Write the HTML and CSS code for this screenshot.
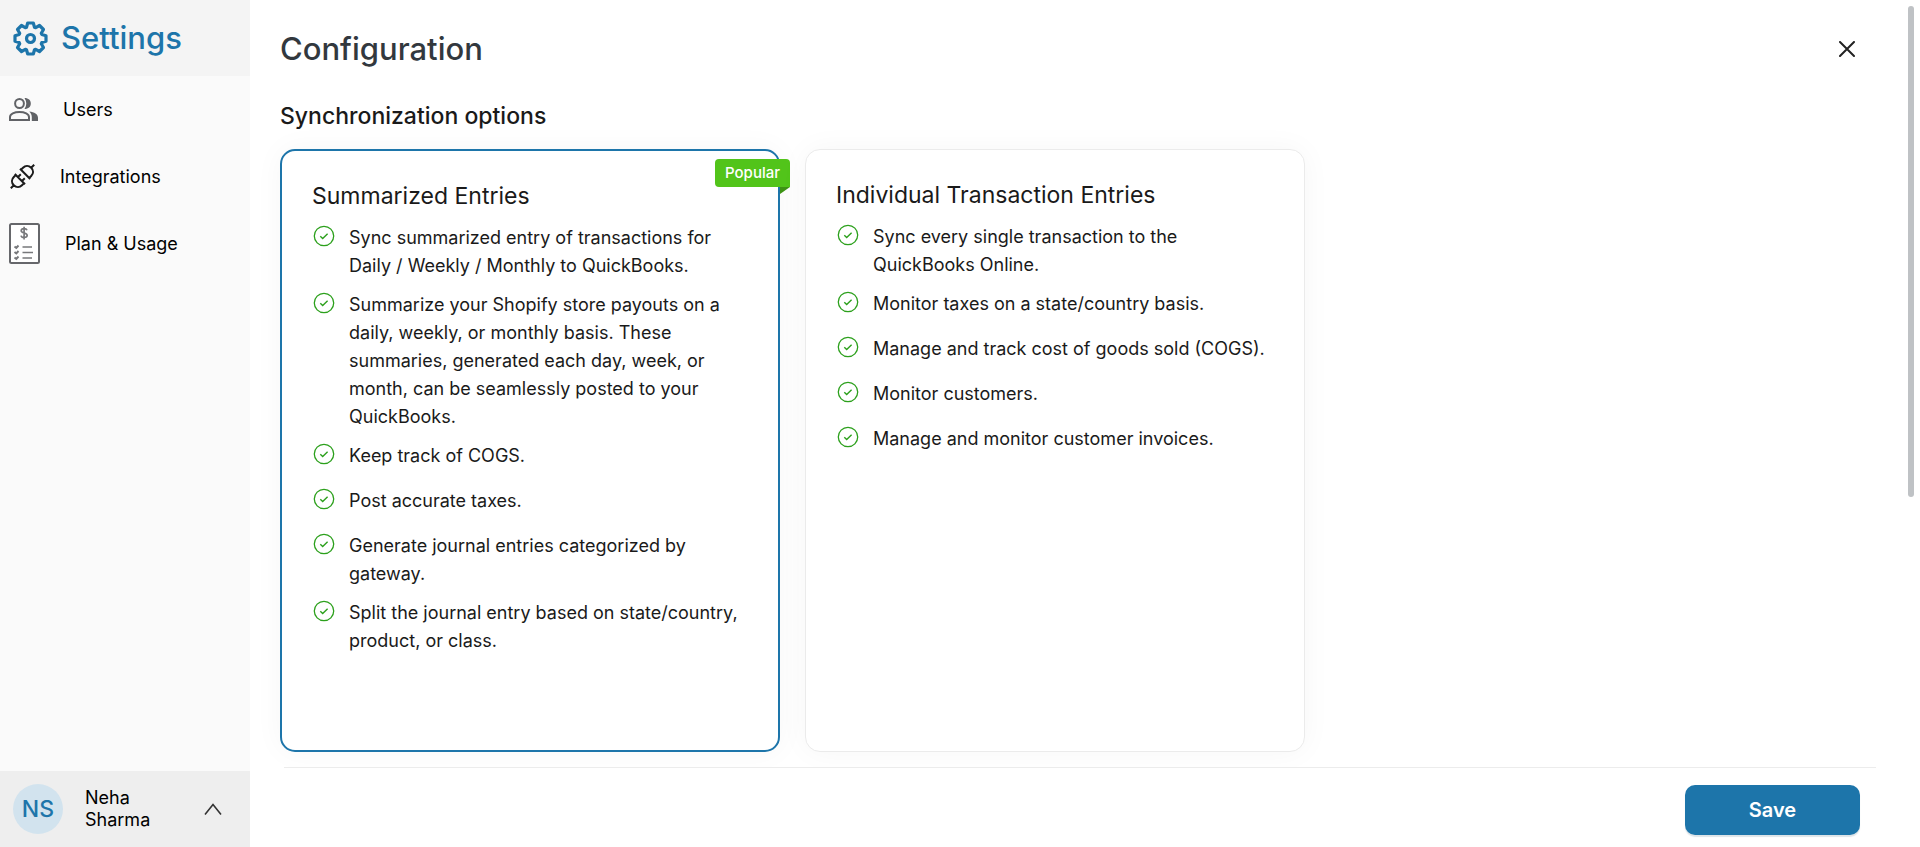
FILE: index.html
```html
<!DOCTYPE html>
<html lang="en">
<head>
<meta charset="utf-8">
<title>Settings - Configuration</title>
<meta name="viewport" content="width=device-width, initial-scale=1">
<link rel="stylesheet" href="styles.css">
</head>
<body>
<svg class="sprite" aria-hidden="true">
  <symbol id="check" viewBox="0 0 22 22">
    <circle cx="11" cy="11" r="9.700" fill="none" stroke="currentColor" stroke-width="1.300"/>
    <path d="M7.300 11.200l2.400 2.300 4.900-4.700" fill="none" stroke="currentColor" stroke-width="1.400"/>
  </symbol>
</svg>
<div class="app">
  <aside class="sidebar">
    <header class="brand">
      <svg class="brand-icon" viewBox="-17.500 -17.500 35 35" fill="none" stroke="currentColor" stroke-width="3.200" stroke-linejoin="round" aria-hidden="true">
        <path d="M-2.800-15.500H2.800L4-11.300 5.200-10.800 9-13 13-9 10.800-5.200 11.300-4 15.500-2.800V2.800L11.300 4 10.800 5.200 13 9 9 13 5.200 10.800 4 11.300 2.800 15.500H-2.800L-4 11.300-5.200 10.800-9 13-13 9-10.800 5.200-11.300 4-15.500 2.800V-2.800L-11.300-4-10.800-5.200-13-9-9-13-5.200-10.800-4-11.300z"/>
        <circle r="4"/>
      </svg>
      <h1 class="brand-title">Settings</h1>
    </header>
    <nav class="nav">
      <a class="nav-link" href="#users">
        <svg class="icon-users" viewBox="0 0 29 23" aria-hidden="true">
          <ellipse cx="10.500" cy="5.500" rx="4.400" ry="4.500" fill="none" stroke="#606266" stroke-width="2"/>
          <path d="M15.500 0c4 0 6.300 2.300 6.300 5.500s-2.300 5.500-6.300 5.500c2.400-3.400 2.400-7.600 0-11z" fill="#606266"/>
          <path d="M1 22v-3c0-3 4.300-5 9.500-5s9.500 2 9.500 5v3z" fill="none" stroke="#606266" stroke-width="2"/>
          <path d="M20.300 13.500c5 .4 8.700 2.700 8.700 6.200V23h-6.200v-4c0-2.200-1-4-2.500-5.500z" fill="#606266"/>
        </svg>
        <span>Users</span>
      </a>
      <a class="nav-link" href="#integrations">
        <svg class="icon-plug" viewBox="0 0 25 25" fill="none" stroke="#1c1c1c" stroke-width="2" aria-hidden="true">
          <path d="M.8 24.200l3-3M3.800 21.200c-2.600-2.600-2.300-5.900 0-8.200l2-2 8.200 8.200-2 2c-2.300 2.300-5.600 2.600-8.200 0zM4.800 10l10.200 10.200M8 13l2.800-2.800M12 17l2.800-2.800"/>
          <path d="M24.200.8l-3 3M21.200 3.800c2.600 2.600 2.300 5.900 0 8.200l-2 2L11 5.800l2-2c2.300-2.300 5.600-2.600 8.200 0zM10 4.800l10.200 10.200"/>
        </svg>
        <span>Integrations</span>
      </a>
      <a class="nav-link" href="#plan">
        <svg class="icon-plan" viewBox="0 0 31 41" fill="none" stroke="#77787b" aria-hidden="true">
          <rect x="1" y="1" width="29" height="39" rx="1.500" fill="#fff" stroke="#66676b" stroke-width="2"/>
          <path d="M18 7.300c-.4-1.200-1.500-1.700-2.900-1.700-1.700 0-2.900.8-2.900 2.100 0 3 6 1.500 6 4.600 0 1.400-1.300 2.200-3.100 2.200-1.600 0-2.800-.7-3.100-1.900M15.100 3.800v12.600" stroke-width="1.700"/>
          <path d="M5.500 23.500l1.800 1.500 2.200-2.500M5.500 29l1.800 1.500 2.200-2.500M5.500 34.500l1.800 1.500 2.200-2.500" stroke-width="1.900"/>
          <path d="M13.500 24H23M13.500 29.500H24M13.500 35H23" stroke-width="1.400"/>
        </svg>
        <span>Plan &amp; Usage</span>
      </a>
    </nav>
    <button class="account" type="button">
      <span class="avatar">NS</span>
      <span class="account-name">Neha Sharma</span>
      <svg class="chevron" viewBox="0 0 18 12" fill="none" stroke="#333" stroke-width="1.600" aria-hidden="true"><path d="M1 11.500l8-10 8 10"/></svg>
    </button>
  </aside>

  <main class="panel">
    <div class="content">
      <header class="panel-head">
        <h2 class="panel-title">Configuration</h2>
        <button class="close" type="button" aria-label="Close">
          <svg class="close-icon" viewBox="0 0 16 16" stroke="#222" stroke-width="2" stroke-linecap="round" aria-hidden="true"><path d="M1 1l14 14M15 1L1 15"/></svg>
        </button>
      </header>
      <h3 class="section-title">Synchronization options</h3>
      <div class="cards">
        <section class="card card-selected">
          <span class="ribbon">Popular</span>
          <h4 class="card-title">Summarized Entries</h4>
          <ul class="features">
            <li><svg class="check"><use href="#check"/></svg><span>Sync summarized entry of transactions for<br>Daily / Weekly / Monthly to QuickBooks.</span></li>
            <li><svg class="check"><use href="#check"/></svg><span>Summarize your Shopify store payouts on a<br>daily, weekly, or monthly basis. These<br>summaries, generated each day, week, or<br>month, can be seamlessly posted to your<br>QuickBooks.</span></li>
            <li><svg class="check"><use href="#check"/></svg><span>Keep track of COGS.</span></li>
            <li><svg class="check"><use href="#check"/></svg><span>Post accurate taxes.</span></li>
            <li><svg class="check"><use href="#check"/></svg><span>Generate journal entries categorized by<br>gateway.</span></li>
            <li><svg class="check"><use href="#check"/></svg><span>Split the journal entry based on state/country,<br>product, or class.</span></li>
          </ul>
        </section>
        <section class="card">
          <h4 class="card-title">Individual Transaction Entries</h4>
          <ul class="features">
            <li><svg class="check"><use href="#check"/></svg><span>Sync every single transaction to the<br>QuickBooks Online.</span></li>
            <li><svg class="check"><use href="#check"/></svg><span>Monitor taxes on a state/country basis.</span></li>
            <li><svg class="check"><use href="#check"/></svg><span>Manage and track cost of goods sold (COGS).</span></li>
            <li><svg class="check"><use href="#check"/></svg><span>Monitor customers.</span></li>
            <li><svg class="check"><use href="#check"/></svg><span>Manage and monitor customer invoices.</span></li>
          </ul>
        </section>
      </div>
    </div>
    <footer class="actions">
      <button class="save" type="button">Save</button>
    </footer>
    <div class="scroll-thumb"></div>
  </main>
</div>
</body>
</html>
```
FILE: styles.css
```css
* {
  box-sizing: border-box;
}

body {
  margin: 0;
  font-family: Inter, "Open Sans", sans-serif;
  font-size: 18px;
  color: #1a1a1a;
  background: #fff;
}

h1, h2, h3, h4, ul {
  margin: 0;
  padding: 0;
}

button {
  font: inherit;
  border: 0;
  cursor: pointer;
}

.sprite {
  display: none;
}

.app {
  display: grid;
  grid-template-columns: 250px 1fr;
  height: 100vh;
}

/* Sidebar */
.sidebar {
  display: flex;
  flex-direction: column;
  background: #fafafa;
}

.brand {
  display: flex;
  align-items: center;
  gap: 13px;
  height: 76px;
  padding: 0 13px;
  background: #f4f4f4;
  color: #1d75aa;
}

.brand-icon {
  width: 35px;
  height: 35px;
}

.brand-title {
  font-size: 31px;
  font-weight: 500;
  line-height: 40px;
}

.nav {
  display: flex;
  flex: 1;
  flex-direction: column;
}

.nav-link {
  display: flex;
  align-items: center;
  gap: 25px;
  height: 67px;
  padding-left: 9px;
  color: #000;
  text-decoration: none;
}

.icon-users {
  width: 29px;
  height: 23px;
}

.icon-plug {
  width: 25px;
  height: 25px;
  margin-left: 1px;
}

.icon-plan {
  width: 31px;
  height: 41px;
}

.account {
  display: flex;
  align-items: center;
  height: 76px;
  padding: 0 28px 0 13px;
  background: #eee;
  color: #000;
  text-align: left;
}

.avatar {
  display: grid;
  place-items: center;
  width: 50px;
  height: 50px;
  border-radius: 50%;
  background: #d2e3ee;
  color: #1d75aa;
  font-size: 23px;
  font-weight: 500;
}

.account-name {
  width: 80px;
  margin: 0 auto 0 22px;
  line-height: 22px;
}

.chevron {
  width: 18px;
  height: 12px;
}

/* Main panel */
.panel {
  position: relative;
  display: flex;
  flex-direction: column;
  min-width: 0;
}

.content {
  flex: 1;
  min-height: 0;
  padding: 29px 65px 0 30px;
  overflow: hidden;
}

.panel-head {
  display: flex;
  align-items: center;
  justify-content: space-between;
}

.panel-title {
  color: #32383e;
  font-size: 31px;
  font-weight: 500;
  line-height: 40px;
}

.close {
  display: grid;
  padding: 0;
  background: none;
}

.close-icon {
  width: 16px;
  height: 16px;
}

.section-title {
  margin: 31px 0 17px;
  font-size: 23px;
  font-weight: 500;
  line-height: 32px;
}

.cards {
  display: flex;
  gap: 25px;
}

.card {
  position: relative;
  flex: 0 1 500px;
  min-height: 603px;
  padding: 30px;
  border: 1px solid #ebebeb;
  border-radius: 15px;
  background: #fff;
  box-shadow: 0 0 30px rgba(0, 0, 0, 0.04);
}

.card-selected {
  border: 2px solid #1d75aa;
}

.card-title {
  margin-bottom: 13px;
  font-size: 23px;
  font-weight: 400;
  line-height: 30px;
}

.features {
  list-style: none;
}

.features li {
  display: flex;
  gap: 14px;
  min-height: 45px;
  padding: 0 0 11px 1px;
  line-height: 28px;
  white-space: nowrap;
}

.check {
  flex: none;
  width: 22px;
  height: 22px;
  margin-top: 1px;
  color: #2ca01c;
}

.ribbon {
  position: absolute;
  top: 8px;
  right: -12px;
  padding: 0 10px;
  border-radius: 4px 4px 0 4px;
  background: #52c41a;
  color: #fff;
  font-size: 15px;
  font-weight: 500;
  line-height: 28px;
}

.ribbon::after {
  content: "";
  position: absolute;
  top: 100%;
  right: 0;
  border-top: 7px solid #3d9314;
  border-right: 10px solid transparent;
}

.actions {
  display: flex;
  justify-content: flex-end;
  margin: 0 44px 0 34px;
  padding: 17px 16px 12px;
  border-top: 1px solid #ececec;
  background: #fff;
}

.save {
  width: 175px;
  height: 50px;
  border-radius: 10px;
  background: #1d75aa;
  box-shadow: 0 2px 1px rgba(29, 75, 100, 0.15);
  color: #fff;
  font-size: 20px;
  font-weight: 600;
}

.scroll-thumb {
  position: absolute;
  top: 6px;
  right: 6px;
  width: 6px;
  height: 58%;
  border-radius: 3px;
  background: #bfc2c5;
}
```
